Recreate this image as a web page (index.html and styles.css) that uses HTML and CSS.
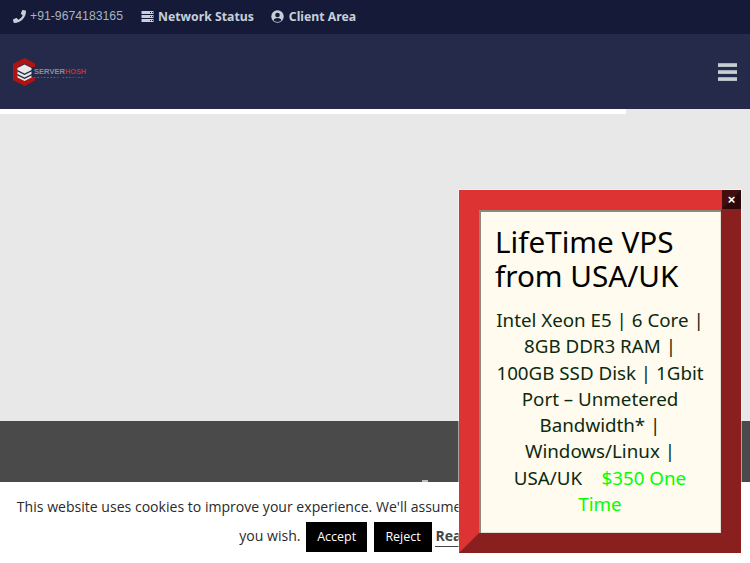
FILE: index.html
```html
<!DOCTYPE html>
<html lang="en">
<head>
<meta charset="utf-8">
<title>ServerHosh</title>
<link rel="stylesheet" href="styles.css">
</head>
<body>
<div class="topbar">
  <span class="top-item phone">
    <svg class="ti" width="13" height="13" viewBox="0 0 512 512"><path fill="currentColor" d="M493.4 24.6l-104-24c-11.300-2.600-22.900 3.300-27.500 13.900l-48 112c-4.200 9.800-1.400 21.300 6.900 28l60.600 49.600c-36 76.700-98.900 140.500-177.200 177.200l-49.600-60.600c-6.800-8.300-18.200-11.100-28-6.900l-112 48C3.900 366.500-2 378.100.6 389.400l24 104C27.100 504.200 36.700 512 48 512c256.100 0 464-207.500 464-464 0-11.200-7.700-20.900-18.600-23.400z"/></svg>
    +91-9674183165
  </span>
  <span class="top-item bold">
    <svg class="ti" width="13" height="13" viewBox="0 0 13 13"><path fill="currentColor" d="M.5 1h12v3H.5zM.5 5h12v3H.5zM.5 9h12v3H.5z"/><path fill="#141a38" d="M9 2h1v1H9zM11 2h1v1h-1zM9 6h1v1H9zM11 6h1v1h-1zM9 10h1v1H9zM11 10h1v1h-1z"/></svg>
    Network Status
  </span>
  <span class="top-item bold">
    <svg class="ti" width="13" height="13" viewBox="0 0 13 13"><circle cx="6.500" cy="6.500" r="6.200" fill="currentColor"/><circle cx="6.500" cy="5" r="2.300" fill="#141a38"/><path fill="#141a38" d="M2.500 10.300c.8-1.700 2.200-2.400 4-2.400s3.200.7 4 2.400c-1 1-2.400 1.600-4 1.600s-3-.6-4-1.600z"/></svg>
    Client Area
  </span>
</div>
<header class="header">
  <svg class="logo" width="74" height="30" viewBox="0 0 74 30">
    <path fill="#b01313" d="M11.500 1 22 6.500V10h-4l-6.500-3.500L5 10v10l6.500 3.500L18 20h4v3.500L11.500 29 0 23V7z"/>
    <path fill="#e8e8e8" d="M11.500 7.500 18.500 11v2l-7 3.500-7-3.500v-2zM4.500 14.500l7 3.500 7-3.500V17l-7 3.500-7-3.500zM4.500 18.500l7 3.500 7-3.500v2l-7 3.500-7-3.500z"/>
    <text class="logo-main" x="21" y="16.500" textLength="31" lengthAdjust="spacingAndGlyphs">SERVER</text>
    <text class="logo-accent" x="52" y="16.500" textLength="21" lengthAdjust="spacingAndGlyphs">HOSH</text>
    <text class="logo-tag" x="22" y="20.500" textLength="48">INTERNET SERVICE</text>
  </svg>
  <div class="burger"><i></i><i></i><i></i></div>
</header>
<div class="white-strip"></div>
<main class="hero"></main>
<section class="dark"><i class="tip"></i></section>
<div class="cookie">
  <p>This website uses cookies to improve your experience. We'll assume you're ok with this, but you can opt-out if
    you wish. <a class="btn">Accept</a> <a class="btn">Reject</a> <a class="more">Read More</a></p>
</div>
<aside class="popup">
  <button class="close">×</button>
  <h2>LifeTime VPS from USA/UK</h2>
  <p>Intel Xeon E5 | 6 Core | 8GB DDR3 RAM | 100GB SSD Disk | 1Gbit Port – Unmetered Bandwidth* | Windows/Linux | USA/UK &nbsp; &nbsp;<span class="price">$350 One Time</span></p>
</aside>
</body>
</html>
```
FILE: styles.css
```css
* { box-sizing: border-box; }
html, body { margin: 0; padding: 0; }
body { height: 563px; overflow: hidden; background: #e8e8e8; font-family: "Open Sans", sans-serif; position: relative; }

.topbar { height: 34px; background: #141a38; color: #c5d0d8; display: flex; align-items: center; padding: 0 0 2px 13px; gap: 17.500px; font-size: 12.250px; }
.top-item { display: flex; align-items: center; gap: 4.500px; white-space: nowrap; }
.phone { gap: 4px; font-family: "Liberation Sans", sans-serif; color: #a9b3bd; }
.phone .ti { color: #c5d0d8; }
.bold { font-weight: 700; font-family: "Noto Sans", sans-serif; }

.header { height: 75px; background: #252a4a; display: flex; align-items: center; justify-content: space-between; padding: 0 13px; }
.logo { display: block; }
.logo-main { font: 700 7px "Liberation Sans", sans-serif; fill: #8d8d92; }
.logo-accent { font: 700 7px "Liberation Sans", sans-serif; fill: #d02a30; }
.logo-tag { font: 700 2.500px "Liberation Sans", sans-serif; fill: #8a8c9a; }
.burger { width: 19px; display: flex; flex-direction: column; gap: 3px; }
.burger i { display: block; height: 4px; background: linear-gradient(#8fa0ae, #d6dadc 50%, #aab4bc); }

.white-strip { width: 626px; height: 5px; background: #fff; }
.hero { height: 307px; background: #e8e8e8; }
.dark { height: 61px; background: #4a4a4a; padding: 59px 0 0 422px; }
.tip { display: block; width: 6px; height: 2px; background: #b9c0c4; }

.cookie { height: 81px; background: #fff; padding: 10px 16px 0; color: #2a2a2a; font-size: 14.070px; line-height: 29px; text-align: center; }
.cookie p { margin: 0; height: 60px; overflow: hidden; }
.btn { display: inline-block; background: #000; color: #fff; font-size: 12.500px; height: 30px; line-height: 29px; padding: 0 11px; margin: 0 0 0 2px; vertical-align: middle; }
.btn + .btn { margin-left: 3.500px; }
.more { font-weight: 700; color: #444; border-bottom: 1px solid #444; white-space: nowrap; padding-bottom: 1px; }

.popup { position: absolute; left: 459px; top: 190px; width: 282px; height: 363px; border: 20px outset #d33; background: #fffbee; padding: 14.500px 16px 0; color: #10200f; box-shadow: 0 0 0 1px rgba(255, 255, 255, .5), inset 2px 2px 0 #8a8a80, inset -1px -1px 0 #e6dccf; }
.popup h2 { margin: 0 0 14.500px; font-family: "Noto Sans", sans-serif; font-weight: 400; font-size: 29.700px; line-height: 34px; color: #000; }
.popup p { margin: 0 -2px; font-family: "Noto Sans", sans-serif; font-size: 18.750px; line-height: 26.250px; text-align: center; color: #0c2a10; }
.price { color: #0f0; }
.close { position: absolute; top: -20px; right: -20px; width: 19px; height: 19px; padding: 0; border: 0; background: rgba(0, 0, 0, .7); color: #fff; font: 700 13px/19px "Liberation Sans", sans-serif; }
```
